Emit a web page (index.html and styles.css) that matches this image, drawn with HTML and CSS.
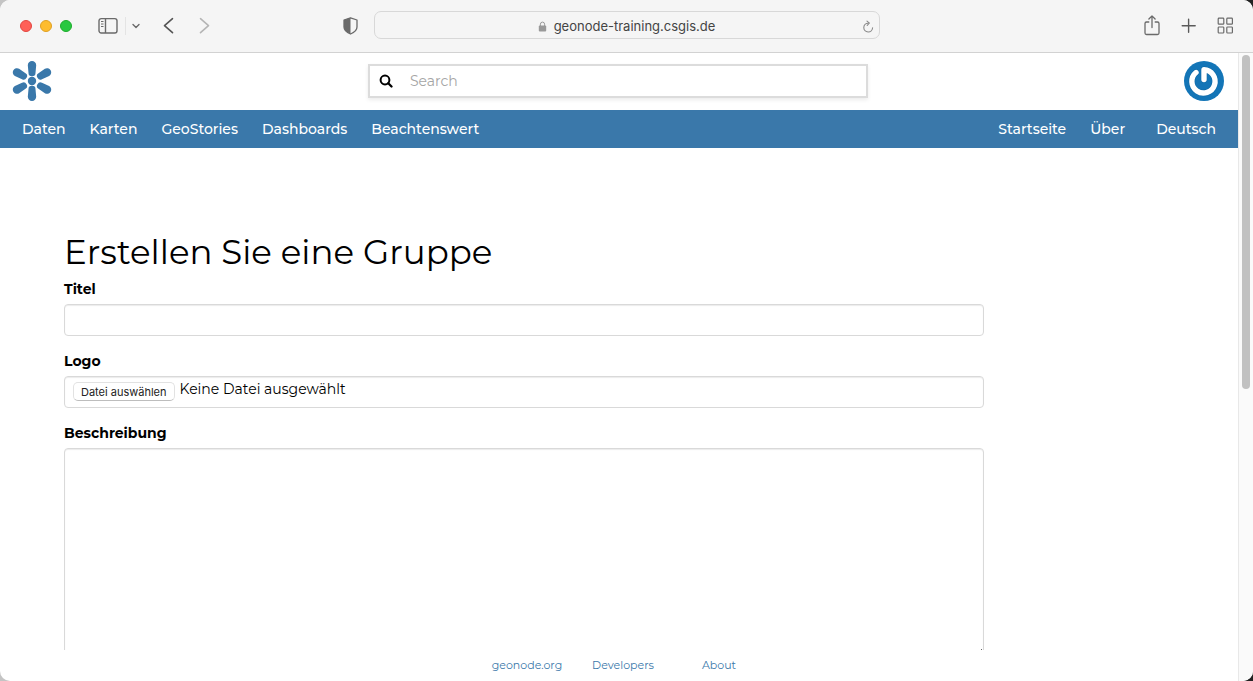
FILE: index.html
```html
<!DOCTYPE html>
<html lang="de">
<head>
<meta charset="utf-8">
<meta name="viewport" content="width=device-width, initial-scale=1">
<title>Erstellen Sie eine Gruppe</title>
<link rel="stylesheet" href="styles.css">
</head>
<body>
<div class="window">
  <div class="toolbar">
    <div class="toolbar-left">
      <div class="lights">
        <button class="light light-close" type="button" aria-label="Schließen"></button>
        <button class="light light-min" type="button" aria-label="Minimieren"></button>
        <button class="light light-max" type="button" aria-label="Maximieren"></button>
      </div>
      <div class="sidebar-tools">
        <button class="tool" type="button" aria-label="Seitenleiste">
          <svg width="20" height="18" viewBox="0 0 20 18" fill="none" stroke="#6a6a6a" stroke-width="1.4"><rect x="1" y="1.600" width="18" height="14.400" rx="2.200"/><path d="M7.500 1.600v14.400"/><path d="M3 4.500h2.500M3 7h2.500M3 9.500h2.500" stroke-width="1"/></svg>
        </button>
        <button class="tool tool-split" type="button" aria-label="Tabgruppen">
          <svg width="10" height="8" viewBox="0 0 10 8" fill="none" stroke="#6a6a6a" stroke-width="1.400" stroke-linecap="round" stroke-linejoin="round"><path d="M2 2.500l3 3 3-3"/></svg>
        </button>
      </div>
      <div class="history">
        <button class="tool" type="button" aria-label="Zurück">
          <svg width="12" height="18" viewBox="0 0 12 18" fill="none" stroke="#555" stroke-width="1.600" stroke-linecap="round" stroke-linejoin="round"><path d="M9.500 1.700L1.500 8.700l8 7"/></svg>
        </button>
        <button class="tool" type="button" aria-label="Vorwärts">
          <svg width="12" height="18" viewBox="0 0 12 18" fill="none" stroke="#b5b5b5" stroke-width="1.600" stroke-linecap="round" stroke-linejoin="round"><path d="M1.500 1.700l8 7-8 7"/></svg>
        </button>
      </div>
      <button class="tool tool-shield" type="button" aria-label="Datenschutzbericht">
        <svg width="15" height="18" viewBox="0 0 15 18"><path d="M7.500 .8L14 3V10c0 3.300-3.500 5.700-6.500 7-3-1.300-6.500-3.700-6.500-7V3z" fill="none" stroke="#6a6a6a" stroke-width="1.300" stroke-linejoin="round"/><path d="M7.500 .8v16.200c-3-1.300-6.500-3.700-6.500-7V3z" fill="#6a6a6a"/></svg>
      </button>
    </div>
    <div class="address">
      <svg width="9" height="11" viewBox="0 0 9 11"><rect x=".8" y="4.600" width="7.400" height="6" rx="1" fill="#999"/><path d="M2.400 5V3.200a2.100 2.100 0 0 1 4.200 0V5" fill="none" stroke="#999"/></svg>
      <span>geonode-training.csgis.de</span>
      <button class="tool reload" type="button" aria-label="Neu laden">
        <svg width="12" height="13" viewBox="0 0 12 13" fill="none" stroke="#888" stroke-width="1.100" stroke-linecap="round"><path d="M6.200 3.200A4.400 4.400 0 1 0 10.600 7.800"/><path d="M5 1.100l2.300 2L5.200 5.500"/></svg>
      </button>
    </div>
    <div class="toolbar-right">
      <button class="tool" type="button" aria-label="Teilen">
        <svg width="17" height="22" viewBox="0 0 17 22" fill="none" stroke="#6a6a6a" stroke-width="1.300" stroke-linecap="round" stroke-linejoin="round"><path d="M4.800 7H2.500A1.500 1.500 0 0 0 1 8.500v9.500A1.500 1.500 0 0 0 2.500 19.500h11a1.500 1.500 0 0 0 1.500-1.500V8.500A1.500 1.500 0 0 0 13.500 7h-2.300"/><path d="M8 12.500V.9M4.900 4L8 .9 11.100 4"/></svg>
      </button>
      <button class="tool" type="button" aria-label="Neuer Tab">
        <svg width="16" height="16" viewBox="0 0 16 16" stroke="#5a5a5a" stroke-width="1.400" stroke-linecap="round"><path d="M7.600 1.200v13M1.200 7.700h13"/></svg>
      </button>
      <button class="tool" type="button" aria-label="Tabübersicht">
        <svg width="16" height="18" viewBox="0 0 16 18" fill="none" stroke="#6a6a6a" stroke-width="1.200"><rect x="1.200" y="1.200" width="5.600" height="6" rx=".8"/><rect x="9.800" y="1.200" width="5.600" height="6" rx=".8"/><rect x="1.200" y="10" width="5.600" height="6" rx=".8"/><rect x="9.800" y="10" width="5.600" height="6" rx=".8"/></svg>
      </button>
    </div>
  </div>

  <div class="viewport">
    <div class="page">
      <header class="header">
        <a class="logo" href="#" aria-label="GeoNode">
          <svg width="40" height="40" viewBox="-20 -20 40 40" fill="#3a78aa"><defs><path id="petal" d="M-4.200-17.300a4.200 4.200 0 0 1 8.400 0L3.500-9.500a3.500 3.200 0 0 1-7 0z"/></defs><circle r="4.200"/><use href="#petal" transform="translate(0 1.500)"/><use href="#petal" transform="rotate(60)"/><use href="#petal" transform="rotate(120)"/><use href="#petal" transform="translate(0 -1.500) rotate(180)"/><use href="#petal" transform="rotate(240)"/><use href="#petal" transform="rotate(300)"/></svg>
        </a>
        <form class="search" role="search">
          <button class="tool" type="submit" aria-label="Suchen">
            <svg width="14" height="14" viewBox="0 0 14 14" fill="none" stroke="#000"><circle cx="6" cy="6" r="4.400" stroke-width="2"/><path d="M9.300 9.300l3.200 3.200" stroke-width="2.300" stroke-linecap="round"/></svg>
          </button>
          <input class="search-input" type="search" placeholder="Search" aria-label="Search">
        </form>
        <a class="avatar" href="#" aria-label="Profil">
          <svg width="40" height="40" viewBox="0 0 40 40"><circle cx="20" cy="20" r="20" fill="#1375b7"/><g fill="none" stroke-linecap="round" stroke-linejoin="round"><path d="M12 11.500A11.600 11.600 0 1 0 20 8.800V18.500" stroke="#0b5489" stroke-width="6.400" opacity=".4"/><path d="M12 11.500A11.600 11.600 0 1 0 20 8.800V18.500" stroke="#fff" stroke-width="5.400"/></g></svg>
        </a>
      </header>

      <nav class="nav">
        <div class="nav-group">
          <a href="#">Daten</a>
          <a href="#">Karten</a>
          <a href="#">GeoStories</a>
          <a href="#">Dashboards</a>
          <a href="#">Beachtenswert</a>
        </div>
        <div class="nav-group">
          <a href="#">Startseite</a>
          <a href="#">Über</a>
          <a class="nav-language" href="#">Deutsch</a>
        </div>
      </nav>

      <main class="main">
        <div class="container">
          <form class="group-form">
            <h1 class="title">Erstellen Sie eine Gruppe</h1>
            <div class="field">
              <label class="field-label" for="title">Titel</label>
              <input class="control" id="title" type="text">
            </div>
            <div class="field">
              <label class="field-label" for="logo">Logo</label>
              <div class="control file">
                <input class="visually-hidden" id="logo" type="file">
                <label class="file-button" for="logo">Datei auswählen</label>
                <span class="file-name">Keine Datei ausgewählt</span>
              </div>
            </div>
            <div class="field">
              <label class="field-label" for="description">Beschreibung</label>
              <textarea class="control description" id="description"></textarea>
            </div>
          </form>
        </div>
      </main>

      <footer class="footer">
        <a href="#">geonode.org</a>
        <a href="#">Developers</a>
        <a href="#">About</a>
      </footer>
    </div>
    <div class="scrollbar"><div class="scroll-thumb"></div></div>
  </div>
</div>
</body>
</html>
```

FILE: styles.css
```css
* {
  box-sizing: border-box;
}

body {
  margin: 0;
  background: linear-gradient(90deg, #c4c4c4 50%, #222 50%);
  color: #000;
  font-family: Montserrat, Inter, sans-serif;
  font-size: 14px;
  line-height: 20px;
}

a {
  color: inherit;
  text-decoration: none;
}

.window {
  display: flex;
  flex-direction: column;
  height: 100vh;
  overflow: hidden;
  border-radius: 10px;
  background: #fff;
}

/* Browser toolbar */

.toolbar {
  display: grid;
  grid-template-columns: 1fr minmax(0, 506px) 1fr;
  align-items: center;
  flex: none;
  height: 53px;
  border-bottom: 1px solid #d2d2d2;
  background: #f5f5f5;
}

.toolbar-left,
.toolbar-right,
.lights,
.sidebar-tools,
.history {
  display: flex;
  align-items: center;
}

.toolbar-left {
  padding: 0 16px 0 20px;
}

.lights {
  gap: 8px;
}

.light {
  width: 12px;
  height: 12px;
  padding: 0;
  border: 1px solid;
  border-radius: 50%;
}

.light-close {
  border-color: #e24640;
  background: #ff5f57;
}

.light-min {
  border-color: #dfa023;
  background: #febc2e;
}

.light-max {
  border-color: #1dad2b;
  background: #28c840;
}

.tool {
  display: flex;
  padding: 0;
  border: 0;
  background: none;
}

.sidebar-tools {
  gap: 7px;
  margin-left: 26px;
}

.tool-split {
  padding: 5px 0 5px 5px;
  border-left: 1px solid #e4e4e4;
}

.history {
  gap: 24px;
  margin-left: 22px;
}

.tool-shield {
  margin-left: auto;
}

.address {
  display: flex;
  align-items: center;
  justify-content: center;
  gap: 7px;
  position: relative;
  height: 28px;
  margin-bottom: 2px;
  padding-top: 2px;
  border: 1px solid #d8d8d8;
  border-radius: 7px;
  color: #444;
  font-family: Inter, sans-serif;
  font-size: 13px;
}

.reload {
  position: absolute;
  right: 5px;
}

.toolbar-right {
  justify-content: flex-end;
  gap: 20px;
  padding-right: 20px;
}

/* Page */

.viewport {
  display: grid;
  grid-template-columns: minmax(0, 1fr) 15px;
  flex: 1;
  min-height: 0;
}

.page {
  display: flex;
  flex-direction: column;
  min-height: 0;
}

.scrollbar {
  padding: 2px 3px;
  border-left: 1px solid #e8e8e8;
  background: #fafafa;
}

.scroll-thumb {
  width: 8px;
  height: 53.5%;
  border-radius: 4px;
  background: #c1c1c1;
}

.header {
  display: grid;
  grid-template-columns: 1fr minmax(0, 500px) 1fr;
  align-items: center;
  flex: none;
  height: 57px;
  padding: 0 14px 2px 12px;
}

.logo,
.avatar {
  display: flex;
}

.avatar {
  justify-self: end;
}

.search {
  display: flex;
  align-items: center;
  gap: 17px;
  height: 34px;
  padding-left: 9px;
  border: 2px solid #dcdcdc;
  box-shadow: 0 2px 4px rgba(0, 0, 0, 0.08);
}

.search-input {
  flex: 1;
  min-width: 0;
  padding: 0;
  border: 0;
  outline: 0;
  background: none;
  font: inherit;
}

.search-input::placeholder {
  color: #a5a5a5;
}

.nav {
  display: flex;
  align-items: center;
  justify-content: space-between;
  flex: none;
  height: 38px;
  padding: 0 22px;
  background: #3a78aa;
  color: #fff;
  font-weight: 500;
}

.nav-group {
  display: flex;
  gap: 24px;
}

.nav-language {
  margin-left: 7px;
}

.main {
  flex: 1;
  min-height: 0;
  overflow: hidden;
}

.container {
  max-width: 1140px;
  margin: 0 auto;
  padding: 84px 0 0 15px;
}

.group-form {
  width: calc(100% * 10 / 12 - 15px);
  max-width: 920px;
}

.title {
  margin: 0 0 7px;
  font-size: 34px;
  font-weight: 400;
  line-height: 40px;
}

.field {
  margin-bottom: 15px;
}

.field-label {
  display: block;
  margin-bottom: 5px;
  font-weight: 700;
}

.control {
  display: block;
  width: 100%;
  height: 32px;
  padding: 4px 8px;
  border: 1px solid #d9d9d9;
  border-radius: 4px;
  outline: 0;
  background: #fff;
  box-shadow: inset 0 1px 1px rgba(0, 0, 0, 0.08);
  font: inherit;
}

.file {
  display: flex;
  align-items: flex-start;
  gap: 5px;
  position: relative;
  padding-top: 2px;
}

.file-button {
  margin-top: 3px;
  padding: 1px 7px 0;
  border: 1px solid #e2e2e2;
  border-bottom-color: #bdbdbd;
  border-radius: 5px;
  color: #222;
  font-family: Inter, sans-serif;
  font-size: 11px;
  line-height: 16px;
}

.visually-hidden {
  position: absolute;
  width: 1px;
  height: 1px;
  overflow: hidden;
  opacity: 0;
}

.description {
  height: 210px;
  resize: vertical;
}

.footer {
  display: grid;
  grid-template-columns: repeat(3, 96px);
  justify-content: center;
  flex: none;
  padding: 5px 0 6px 8px;
  color: #3a78aa;
  font-size: 11px;
  text-align: center;
}
```
